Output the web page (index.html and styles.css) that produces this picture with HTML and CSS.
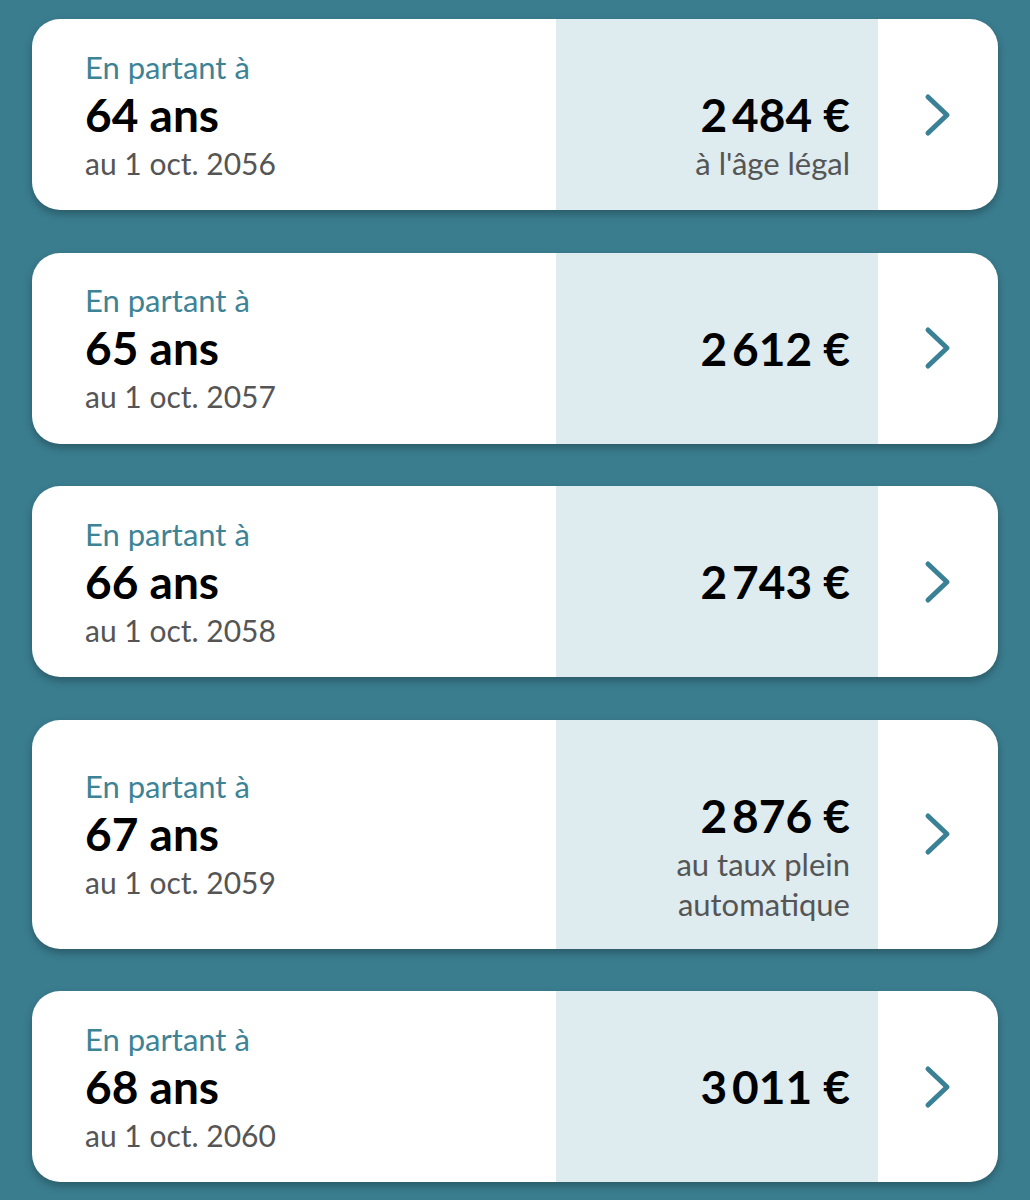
FILE: index.html
```html
<!DOCTYPE html>
<html lang="fr">
<head>
    <meta charset="UTF-8">
    <title>Simulation retraite</title>
    <link rel="stylesheet" href="styles.css">
</head>
<body>
    <div class="retraiteList">
        <a class="retraiteCard" href="#">
            <div class="depart">
                <span class="depart-label">En partant à</span>
                <span class="depart-age">64 ans</span>
                <span class="depart-date">au 1 oct. 2056</span>
            </div>
            <div class="montant">
                <span class="montant-value">2<span class="thin"></span>484 €</span>
                <span class="montant-note">à l'âge légal</span>
            </div>
            <div class="chevron">
                <svg width="28" height="44" viewBox="0 0 28 44"><path d="M4 4 L23 22 L4 40"/></svg>
            </div>
        </a>
        <a class="retraiteCard" href="#">
            <div class="depart">
                <span class="depart-label">En partant à</span>
                <span class="depart-age">65 ans</span>
                <span class="depart-date">au 1 oct. 2057</span>
            </div>
            <div class="montant">
                <span class="montant-value">2<span class="thin"></span>612 €</span>
            </div>
            <div class="chevron">
                <svg width="28" height="44" viewBox="0 0 28 44"><path d="M4 4 L23 22 L4 40"/></svg>
            </div>
        </a>
        <a class="retraiteCard" href="#">
            <div class="depart">
                <span class="depart-label">En partant à</span>
                <span class="depart-age">66 ans</span>
                <span class="depart-date">au 1 oct. 2058</span>
            </div>
            <div class="montant">
                <span class="montant-value">2<span class="thin"></span>743 €</span>
            </div>
            <div class="chevron">
                <svg width="28" height="44" viewBox="0 0 28 44"><path d="M4 4 L23 22 L4 40"/></svg>
            </div>
        </a>
        <a class="retraiteCard" href="#">
            <div class="depart">
                <span class="depart-label">En partant à</span>
                <span class="depart-age">67 ans</span>
                <span class="depart-date">au 1 oct. 2059</span>
            </div>
            <div class="montant">
                <span class="montant-value">2<span class="thin"></span>876 €</span>
                <span class="montant-note">au taux plein<br>automatique</span>
            </div>
            <div class="chevron">
                <svg width="28" height="44" viewBox="0 0 28 44"><path d="M4 4 L23 22 L4 40"/></svg>
            </div>
        </a>
        <a class="retraiteCard" href="#">
            <div class="depart">
                <span class="depart-label">En partant à</span>
                <span class="depart-age">68 ans</span>
                <span class="depart-date">au 1 oct. 2060</span>
            </div>
            <div class="montant">
                <span class="montant-value">3<span class="thin"></span>011 €</span>
            </div>
            <div class="chevron">
                <svg width="28" height="44" viewBox="0 0 28 44"><path d="M4 4 L23 22 L4 40"/></svg>
            </div>
        </a>
    </div>
</body>
</html>
```

FILE: styles.css
```css
html, body {
    margin: 0;
    padding: 0;
}

body {
    font-family: Lato, "Open Sans", sans-serif;
    background-color: #3a7d8f;
    color: #000;
}

.retraiteList {
    display: flex;
    flex-direction: column;
    gap: 42.5px;
    padding: 19px 32px 18px 32px;
}

.retraiteCard {
    display: flex;
    align-items: stretch;
    min-height: 191px;
    background-color: #fff;
    border-radius: 28px;
    overflow: hidden;
    text-decoration: none;
    color: inherit;
    box-shadow: 0 4px 8px rgba(0, 0, 0, 0.28);
}

.depart {
    flex: 1;
    display: flex;
    flex-direction: column;
    justify-content: center;
    padding-left: 53px;
}

.depart-label {
    font-size: 31px;
    line-height: 40px;
    color: #3d8396;
}

.depart-age {
    font-size: 46px;
    font-weight: bold;
    line-height: 56px;
}

.depart-date {
    font-size: 30px;
    line-height: 40px;
    color: #555;
}

.montant {
    width: 294px;
    padding: 68px 28px 25px 0;
    background-color: #deebef;
    display: flex;
    flex-direction: column;
    align-items: flex-end;
    text-align: right;
}

.montant-value {
    font-size: 46px;
    font-weight: bold;
    line-height: 56px;
}

.thin {
    display: inline-block;
    width: 5px;
}

.montant-note {
    font-size: 31px;
    line-height: 40px;
    color: #555;
}

.chevron {
    width: 120px;
    display: flex;
    align-items: center;
    justify-content: center;
}

.chevron svg path {
    fill: none;
    stroke: #3a8196;
    stroke-width: 5;
    stroke-linecap: round;
    stroke-linejoin: round;
}
```
